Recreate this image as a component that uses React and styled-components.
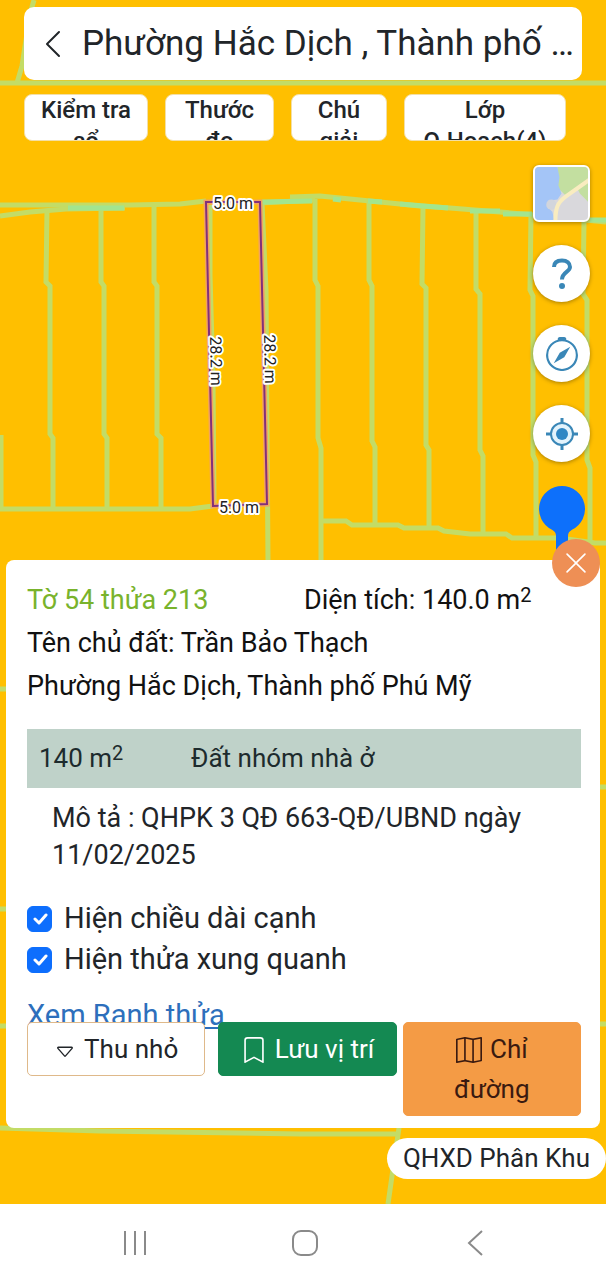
import React, { useState } from "react";
import styled, { createGlobalStyle } from "styled-components";
import {
  BsBookmark,
  BsCaretDown,
  BsChevronLeft,
  BsCompass,
  BsMap,
  BsXLg,
} from "react-icons/bs";

const GlobalStyle = createGlobalStyle`
  * {
    box-sizing: border-box;
  }

  body {
    margin: 0;
    background-color: #ffbf00;
    color: #212529;
    font-family: Roboto, "Noto Sans", sans-serif;
    font-size: 26px;
  }

  button {
    font-family: inherit;
    color: inherit;
    cursor: pointer;
  }
`;

const Screen = styled.div`
  display: flex;
  flex-direction: column;
  min-height: 100vh;
`;

const MapArea = styled.main`
  position: relative;
  isolation: isolate;
  flex: 1;
  display: flex;
  flex-direction: column;
  padding: 7px 0 24px;
  overflow: hidden;
`;

const MapCanvas = styled.svg`
  position: absolute;
  inset: 0;
  z-index: -1;
  width: 100%;
  height: 100%;
`;

const ParcelLabel = styled.text`
  font-size: 16px;
  fill: #222;
  stroke: white;
  stroke-width: 4px;
  stroke-linejoin: round;
  paint-order: stroke;
  text-anchor: middle;
  dominant-baseline: central;
`;

const Header = styled.header`
  display: flex;
  align-items: center;
  margin: 0 24px;
  padding: 0 10px 0 13px;
  height: 73px;
  border-radius: 10px;
  background-color: white;
`;

const BackButton = styled.button`
  display: flex;
  margin-right: 13px;
  padding: 0;
  border: none;
  background: none;
`;

const Title = styled.h1`
  margin: 0;
  font-size: 35px;
  font-weight: normal;
  line-height: 44px;
  white-space: nowrap;
`;

const Toolbar = styled.nav`
  display: grid;
  grid-template-columns: 124fr 109fr 96fr 162fr;
  gap: 17px;
  margin-top: 14px;
  padding: 0 40px 0 24px;
`;

const ToolButton = styled.button`
  display: block;
  min-width: 0;
  height: 47px;
  padding: 0 12px;
  border: 1px solid #f3dfa6;
  border-radius: 8px;
  background-color: white;
  overflow: hidden;
`;

const ToolLabel = styled.span`
  display: block;
  height: 45px;
  font-size: 24px;
  font-weight: 500;
  line-height: 31px;
`;

const Controls = styled.div`
  align-self: flex-end;
  display: flex;
  flex-direction: column;
  align-items: center;
  gap: 23px;
  margin: 24px 16px 0 0;
`;

const RoundButton = styled.button`
  display: flex;
  align-items: center;
  justify-content: center;
  width: 57px;
  height: 57px;
  padding: 0;
  border: none;
  border-radius: 50%;
  background-color: white;
  color: #3a87b7;
  box-shadow: 0 1px 4px rgba(0, 0, 0, 0.35);
`;

const LayerButton = styled(RoundButton)`
  border: 2px solid white;
  border-radius: 6px;
  overflow: hidden;
`;

const Panel = styled.section`
  position: relative;
  margin: 0 6px;
  padding: 19px 19px 12px 21px;
  border-radius: 8px;
  background-color: white;
`;

const CloseButton = styled.button`
  position: absolute;
  top: -21px;
  right: 0;
  display: flex;
  align-items: center;
  justify-content: center;
  width: 48px;
  height: 48px;
  padding: 0;
  border: none;
  border-radius: 50%;
  background-color: #ee8f55;
  color: white;
`;

const Info = styled.div`
  display: grid;
  grid-template-columns: 1fr 1fr;
  color: #111;
  font-size: 27px;
  line-height: 43px;
`;

const InfoText = styled.p`
  grid-column: ${(props) => (props.$wide ? "1 / -1" : "auto")};
  margin: 0;
  color: ${(props) => (props.$accent ? "#79b32c" : "inherit")};
`;

const Sup = styled.sup`
  font-size: 20px;
  line-height: 0;
  vertical-align: 7px;
`;

const LandUse = styled.div`
  display: flex;
  margin-top: 21px;
  padding: 0 12px;
  background-color: #bfd2c9;
  color: #1d2b2d;
  line-height: 59px;
`;

const LandArea = styled.span`
  width: 152px;
`;

const Description = styled.p`
  margin: 0;
  padding: 12px 25px 24px;
  font-size: 27px;
  line-height: 37px;
`;

const CheckRow = styled.label`
  display: flex;
  align-items: center;
  gap: 12px;
  font-size: 29px;
  line-height: 41px;
  cursor: pointer;
`;

const CheckBox = styled.span`
  display: grid;
  place-items: center;

  > * {
    grid-area: 1 / 1;
  }

  svg {
    pointer-events: none;
  }
`;

const CheckInput = styled.input`
  appearance: none;
  width: 25px;
  height: 26px;
  margin: 0;
  border: 1px solid #0d6efd;
  border-radius: 6px;
  background-color: white;

  &:checked {
    background-color: #0d6efd;
  }
`;

const BorderLink = styled.a`
  display: block;
  width: fit-content;
  margin-top: 16px;
  color: #2d6fbc;
  font-size: 29px;
  line-height: 38px;
  text-decoration: underline;
`;

const Actions = styled.div`
  position: relative;
  display: flex;
  align-items: flex-start;
  gap: 6px;
  margin-top: -12px;
`;

const ActionButton = styled.button`
  flex: 1 1 0;
  padding: 6px 20px;
  border: 1px solid ${(props) => props.$border};
  border-radius: 5px;
  background-color: ${(props) => props.$background};
  color: ${(props) => props.$color};
  font-size: 26px;
  line-height: 40px;

  &:first-child {
    margin-right: 7px;
  }

  svg {
    margin-right: 8px;
    vertical-align: -5px;
  }
`;

const LayerTag = styled.div`
  align-self: flex-end;
  margin-top: 10px;
  padding: 0 16px;
  border-radius: 21px;
  background-color: white;
  line-height: 41px;
`;

const SystemBar = styled.footer`
  display: grid;
  grid-template-columns: repeat(3, 1fr);
  height: 76px;
  padding: 2px 46px 0 50px;
  background-color: white;
`;

const SystemButton = styled.button`
  display: flex;
  align-items: center;
  justify-content: center;
  padding: 0;
  border: none;
  background: none;
`;

const BOUNDARIES = [
  "M34 0 L30 14 L22 66 L17 83",
  "M0 83 H606",
  "M0 205 H130 L180 204 L206 201",
  "M0 216 L30 212 L66 209 L125 208",
  "M47 210 L46 282 L50 286 L50 434 L53 438 V508",
  "M101 208 L101 282 L104 286 L104 434 L107 438 V508",
  "M154 207 L154 282 L157 286 L157 434 L161 438 V508",
  "M1 435 V508",
  "M0 509 H190 L213 506",
  "M210 205 L210 275 L213 380 L214 505",
  "M262 203 L266 290 L267 430 L268 560",
  "M260 203 L315 200",
  "M290 197 L320 196 L350 199 L380 202 L420 206 L450 208 L500 212 L534 215 L606 222",
  "M315 199 L315 280 L318 286 L318 438 L321 448 V560",
  "M369 203 L369 280 L372 286 L372 441 L375 447 V524",
  "M423 207 L422 284 L426 288 L426 445 L429 450 V527",
  "M476 211 L476 289 L480 294 L480 450 L483 456 V533",
  "M531 214 L530 290 L533 296 L533 455 L536 462 V538",
  "M584 221 L583 294 L587 300 L587 460 L590 468 V543",
  "M321 521 H346 L352 525 H398 L404 528 H438 L444 531 L470 534 H506 L512 538 H560 L595 543 H606",
  "M0 689 H10",
  "M0 909 H10",
  "M0 1026 H10",
  "M596 787 H606",
  "M596 1024 H606",
  "M0 1128 L100 1131 L300 1134 H398",
  "M399 1128 L392 1176 L388 1204",
];

const OVERLAPS = [
  "M68 208 H124",
  "M262 202 L312 201",
  "M333 199 L341 200",
  "M368 201 L382 202",
  "M400 204 L448 208",
  "M470 211 H500",
  "M503 214 H532",
  "M590 220 H606",
];

const TOOLS = ["Kiểm tra sổ", "Thước đo", "Chú giải", "Lớp Q.Hoạch(4)"];

function ParcelMap() {
  return (
    <MapCanvas viewBox="0 0 606 1204" preserveAspectRatio="xMidYMin slice">
      <rect width="606" height="1204" fill="#ffbf00" />
      <g fill="none" stroke="#c3dc66" strokeWidth="5">
        {BOUNDARIES.map((d) => (
          <path key={d} d={d} />
        ))}
      </g>
      <g fill="none" stroke="#a2e58f" strokeWidth="5">
        {OVERLAPS.map((d) => (
          <path key={d} d={d} />
        ))}
      </g>
      <path
        d="M206 202 H260 L267 504 L213 506 Z"
        fill="none"
        stroke="#f3a35f"
        strokeWidth="5"
      />
      <path
        d="M206 202 H260 L267 504 L213 506 Z"
        fill="none"
        stroke="#82307a"
        strokeWidth="2"
      />
      <ParcelLabel x="233" y="203">5.0 m</ParcelLabel>
      <ParcelLabel x="239" y="507">5.0 m</ParcelLabel>
      <ParcelLabel transform="translate(216 361) rotate(89)">28.2 m</ParcelLabel>
      <ParcelLabel transform="translate(270 359) rotate(89)">28.2 m</ParcelLabel>
    </MapCanvas>
  );
}

function LayerThumb() {
  return (
    <svg width="53" height="53" viewBox="0 0 52 52">
      <rect width="52" height="52" fill="#d9d8dc" />
      <path d="M22 0 H52 V34 L44 26 L42 22 L30 28 L22 20 Z" fill="#c3dfa0" />
      <path
        d="M0 0 H22 L24 10 L23 18 L26 26 L22 32 L13 33 L12 39 L17 44 L19 52 H0 Z"
        fill="#a4c5f7"
      />
      <circle cx="16" cy="37" r="5" fill="#d2d5dc" />
      <path
        d="M20 54 C20 40 22 35 30 29 L54 12"
        fill="none"
        stroke="#f9ecc0"
        strokeWidth="4"
      />
    </svg>
  );
}

function HelpIcon() {
  return (
    <svg width="32" height="32" viewBox="0 0 32 32">
      <path
        d="M8 9 C8 4.500 11 2.500 16 2.500 C21 2.500 24 5 24 9 C24 14 16 14 16 21.500"
        fill="none"
        stroke="#3a87b7"
        strokeWidth="4"
      />
      <circle cx="16" cy="28" r="3" fill="#3a87b7" />
    </svg>
  );
}

function LocateIcon() {
  return (
    <svg width="32" height="32" viewBox="0 0 32 32">
      <circle cx="16" cy="16" r="11" fill="#e3f3fc" stroke="#3a87b7" strokeWidth="2" />
      <circle cx="16" cy="16" r="6" fill="#2f87c4" />
      <path
        d="M16 0 V5 M16 27 V32 M0 16 H5 M27 16 H32"
        stroke="#3a87b7"
        strokeWidth="3"
      />
    </svg>
  );
}

function PinIcon() {
  return (
    <svg width="46" height="75" viewBox="0 0 46 75">
      <path
        d="M23 1 a23 23 0 0 1 10 43.700 q-4 2 -4 6 V72 H17 V50.700 q0 -4 -4 -6 A23 23 0 0 1 23 1 Z"
        fill="#0d70fb"
      />
    </svg>
  );
}

function CheckOption({ id, label }) {
  const [checked, setChecked] = useState(true);

  return (
    <CheckRow htmlFor={id}>
      <CheckBox>
        <CheckInput
          id={id}
          type="checkbox"
          checked={checked}
          onChange={(e) => setChecked(e.target.checked)}
        />
        {checked && (
          <svg width="16" height="16" viewBox="0 0 16 16" fill="none">
            <path
              d="M3 8 L7 12 L14 4"
              stroke="white"
              strokeWidth="3"
              strokeLinecap="round"
              strokeLinejoin="round"
            />
          </svg>
        )}
      </CheckBox>
      {label}
    </CheckRow>
  );
}

function App() {
  return (
    <Screen>
      <GlobalStyle />
      <MapArea>
        <ParcelMap />
        <Header>
          <BackButton aria-label="Quay lại">
            <BsChevronLeft size={32} />
          </BackButton>
          <Title>Phường Hắc Dịch , Thành phố …</Title>
        </Header>
        <Toolbar>
          {TOOLS.map((tool) => (
            <ToolButton key={tool}>
              <ToolLabel>{tool}</ToolLabel>
            </ToolButton>
          ))}
        </Toolbar>
        <Controls>
          <LayerButton aria-label="Lớp bản đồ">
            <LayerThumb />
          </LayerButton>
          <RoundButton aria-label="Trợ giúp">
            <HelpIcon />
          </RoundButton>
          <RoundButton aria-label="La bàn">
            <BsCompass size={34} />
          </RoundButton>
          <RoundButton aria-label="Vị trí của tôi">
            <LocateIcon />
          </RoundButton>
          <PinIcon />
        </Controls>
        <Panel>
          <CloseButton aria-label="Đóng">
            <BsXLg size={26} />
          </CloseButton>
          <Info>
            <InfoText $accent>Tờ 54 thửa 213</InfoText>
            <InfoText>
              Diện tích: 140.0 m<Sup>2</Sup>
            </InfoText>
            <InfoText $wide>Tên chủ đất: Trần Bảo Thạch</InfoText>
            <InfoText $wide>Phường Hắc Dịch, Thành phố Phú Mỹ</InfoText>
          </Info>
          <LandUse>
            <LandArea>
              140 m<Sup>2</Sup>
            </LandArea>
            <span>Đất nhóm nhà ở</span>
          </LandUse>
          <Description>Mô tả : QHPK 3 QĐ 663-QĐ/UBND ngày 11/02/2025</Description>
          <CheckOption id="edges" label="Hiện chiều dài cạnh" />
          <CheckOption id="nearby" label="Hiện thửa xung quanh" />
          <BorderLink href="#ranh-thua">Xem Ranh thửa</BorderLink>
          <Actions>
            <ActionButton $background="white" $border="#dfb98a" $color="#212529">
              <BsCaretDown size={22} />
              Thu nhỏ
            </ActionButton>
            <ActionButton $background="#148952" $border="#148952" $color="white">
              <BsBookmark size={26} />
              Lưu vị trí
            </ActionButton>
            <ActionButton $background="#f49b45" $border="#f49b45" $color="#3a1a10">
              <BsMap size={26} />
              Chỉ đường
            </ActionButton>
          </Actions>
        </Panel>
        <LayerTag>QHXD Phân Khu</LayerTag>
      </MapArea>
      <SystemBar>
        <SystemButton aria-label="Ứng dụng gần đây">
          <svg width="26" height="26" viewBox="0 0 26 26" stroke="#8a8a8a" strokeWidth="2">
            <path d="M3 1 V25 M13 1 V25 M23 1 V25" />
          </svg>
        </SystemButton>
        <SystemButton aria-label="Màn hình chính">
          <svg width="26" height="26" viewBox="0 0 26 26" fill="none" stroke="#8a8a8a" strokeWidth="2">
            <rect x="1" y="1" width="24" height="24" rx="8" />
          </svg>
        </SystemButton>
        <SystemButton aria-label="Trở về">
          <svg width="26" height="26" viewBox="0 0 26 26" fill="none" stroke="#8a8a8a" strokeWidth="2">
            <path d="M20 1 L7 13 L20 25" />
          </svg>
        </SystemButton>
      </SystemBar>
    </Screen>
  );
}

export default App;
